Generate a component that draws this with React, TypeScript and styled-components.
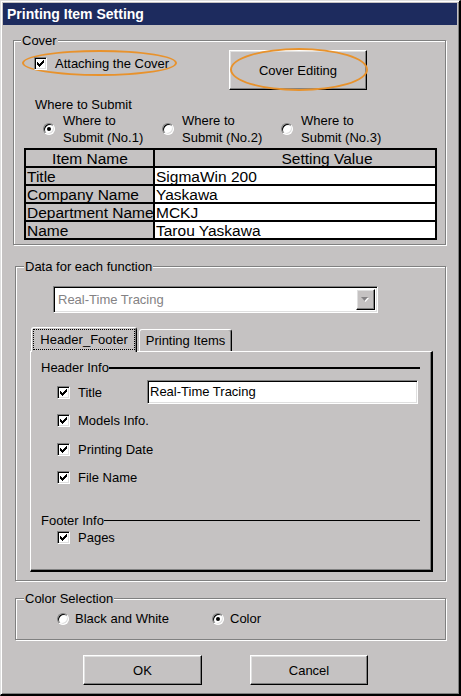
import styled, { createGlobalStyle } from 'styled-components';

const FACE = '#c5c2c2';
const ORANGE = '#e8922c';

const GlobalStyle = createGlobalStyle`
	html, body {
		margin: 0;
		padding: 0;
		background: ${FACE};
	}
	body {
		font-family: "Liberation Sans", Arial, sans-serif;
		font-size: 13px;
		color: #000;
	}
`;

const CheckMark = () => (
	<svg width="7" height="7" viewBox="0 0 7 7" shapeRendering="crispEdges">
		<path
			fill="#000"
			d="M6 0h1v1h-1z M5 1h2v1h-2z M0 2h1v1h-1z M4 2h3v1h-3z M0 3h2v1h-2z M3 3h3v1h-3z M0 4h5v1h-5z M1 5h3v1h-3z M2 6h1v1h-1z"
		/>
	</svg>
);

const CheckBox = ({ checked = true }: { checked?: boolean }) => (
	<CheckBoxBox>{checked && <CheckMark />}</CheckBoxBox>
);

const Check = ({ label }: { label: string }) => (
	<CheckRow>
		<CheckBox />
		<CheckLabel>{label}</CheckLabel>
	</CheckRow>
);

const App = () => (
	<>
		<GlobalStyle />
		<Window>
			<TitleBar>Printing Item Setting</TitleBar>
			<Body>
				<Group $width={433} $top={15} $bottom={4}>
					<Legend>Cover</Legend>
					<CoverTop>
						<Ellipse>
							<CheckBox />
							<EllipseText>Attaching the Cover</EllipseText>
						</Ellipse>
						<CoverButton>
							Cover Editing
							<ButtonRing />
						</CoverButton>
					</CoverTop>
					<SubmitTitle>Where to Submit</SubmitTitle>
					<SubmitRow>
						{[1, 2, 3].map((n) => (
							<SubmitItem key={n}>
								<RadioCircle $checked={n === 1} />
								<SubmitText>
									Where to
									<br />
									Submit (No.{n})
								</SubmitText>
							</SubmitItem>
						))}
					</SubmitRow>
					<Table>
						<Cell $center>Item Name</Cell>
						<Cell $center $shift={64}>
							Setting Value
						</Cell>
						<Cell>Title</Cell>
						<Cell $value>SigmaWin 200</Cell>
						<Cell>Company Name</Cell>
						<Cell $value>Yaskawa</Cell>
						<Cell>Department Name</Cell>
						<Cell $value>MCKJ</Cell>
						<Cell>Name</Cell>
						<Cell $value>Tarou Yaskawa</Cell>
					</Table>
				</Group>

				<Group $width={431} $left={2} $top={21} $bottom={8}>
					<Legend $left={8}>Data for each function</Legend>
					<Combo>
						<ComboText>Real-Time Tracing</ComboText>
						<ComboArrow>
							<svg width="9" height="6" viewBox="0 0 9 6">
								<polygon points="1,1 8,1 4.5,5" fill="#fff" />
								<polygon points="0,0 7,0 3.5,4" fill="#848284" />
							</svg>
						</ComboArrow>
					</Combo>
					<TabStrip>
						<Tab $active>
							<TabFocus>Header_Footer</TabFocus>
						</Tab>
						<Tab>Printing Items</Tab>
					</TabStrip>
					<TabPanel>
						<SectionHead $thick>Header Info</SectionHead>
						<CheckList>
							<CheckRow>
								<CheckBox />
								<CheckLabel $width={69}>Title</CheckLabel>
								<TextInput>Real-Time Tracing</TextInput>
							</CheckRow>
							<Check label="Models Info." />
							<Check label="Printing Date" />
							<Check label="File Name" />
						</CheckList>
						<SectionHead $gap={23}>Footer Info</SectionHead>
						<FooterList>
							<Check label="Pages" />
						</FooterList>
					</TabPanel>
				</Group>

				<Group $width={431} $left={2} $top={17} $bottom={12}>
					<Legend $left={8}>Color Selection</Legend>
					<ColorRow>
						<ColorItem $width={155}>
							<RadioCircle />
							<span>Black and White</span>
						</ColorItem>
						<ColorItem>
							<RadioCircle $checked />
							<span>Color</span>
						</ColorItem>
					</ColorRow>
				</Group>

				<ButtonRow>
					<PushButton $width={119}>OK</PushButton>
					<PushButton $width={118}>Cancel</PushButton>
				</ButtonRow>
			</Body>
		</Window>
	</>
);

const Window = styled.div`
	box-sizing: border-box;
	width: 461px;
	height: 696px;
	background: ${FACE};
	border-style: solid;
	border-width: 1px 2px 2px 1px;
	border-color: #dfdfdf #000 #000 #dfdfdf;
	box-shadow: inset 1px 1px 0 #fff, inset -1px -1px 0 #808080;
	padding: 2px;
	display: flex;
	flex-direction: column;
`;

const TitleBar = styled.div`
	height: 22px;
	line-height: 22px;
	padding-left: 4px;
	background: #1d2b5e;
	color: #fff;
	font-size: 14px;
	font-weight: bold;
`;

const Body = styled.div`
	display: flex;
	flex-direction: column;
	align-items: flex-start;
	padding: 0 10px;
`;

const Group = styled.div<{ $width: number; $left?: number; $top: number; $bottom: number }>`
	box-sizing: border-box;
	width: ${(p) => p.$width}px;
	margin: ${(p) => p.$top}px 0 0 ${(p) => p.$left ?? 0}px;
	padding-bottom: ${(p) => p.$bottom}px;
	border: 1px solid #808080;
	box-shadow: inset 1px 1px 0 #fff, 1px 1px 0 #fff;
	display: flex;
	flex-direction: column;
	align-items: flex-start;
`;

const Legend = styled.div<{ $left?: number }>`
	margin: -8px 0 0 ${(p) => p.$left ?? 7}px;
	padding: 0 1px;
	line-height: 15px;
	background: ${FACE};
`;

const CoverTop = styled.div`
	display: flex;
	align-items: flex-start;
	margin-top: 2px;
	padding-left: 8px;
`;

const Ellipse = styled.div`
	box-sizing: border-box;
	width: 155px;
	height: 26px;
	border: 2px solid ${ORANGE};
	border-radius: 50%;
	display: flex;
	align-items: center;
	padding-left: 10px;
`;

const EllipseText = styled.span`
	margin-left: 8px;
	white-space: nowrap;
`;

const raised = `
	border: 1px solid;
	border-color: #fff #000 #000 #fff;
	box-shadow: inset -1px -1px 0 #808080, inset 1px 1px 0 #dfdfdf;
	background: ${FACE};
`;

const sunken = `
	border: 1px solid;
	border-color: #808080 #fff #fff #808080;
	box-shadow: inset 1px 1px 0 #000, inset -1px -1px 0 #dfdfdf;
	background: #fff;
`;

const CoverButton = styled.div`
	position: relative;
	box-sizing: border-box;
	width: 138px;
	height: 40px;
	margin-left: 52px;
	${raised}
	display: flex;
	align-items: center;
	justify-content: center;
`;

const ButtonRing = styled.span`
	position: absolute;
	left: 0;
	top: -3px;
	width: 138px;
	height: 43px;
	box-sizing: border-box;
	border: 2px solid ${ORANGE};
	border-radius: 50%;
	pointer-events: none;
`;

const SubmitTitle = styled.div`
	margin-top: 7px;
	padding-left: 21px;
	line-height: 15px;
`;

const SubmitRow = styled.div`
	display: flex;
	padding-left: 29px;
`;

const SubmitItem = styled.div`
	width: 119px;
	display: flex;
	align-items: center;
	gap: 8px;
`;

const SubmitText = styled.div`
	line-height: 17px;
	white-space: nowrap;
`;

const RadioCircle = styled.span<{ $checked?: boolean }>`
	position: relative;
	flex: none;
	box-sizing: border-box;
	width: 12px;
	height: 12px;
	border-radius: 50%;
	${sunken}

	&::after {
		content: '';
		display: ${(p) => (p.$checked ? 'block' : 'none')};
		position: absolute;
		left: 3px;
		top: 3px;
		width: 4px;
		height: 4px;
		border-radius: 50%;
		background: #000;
	}
`;

const Table = styled.div`
	display: grid;
	grid-template-columns: 127px 280px;
	grid-auto-rows: 16px;
	gap: 2px;
	margin: 2px 0 0 10px;
	border: 2px solid #000;
	background: #000;
`;

const Cell = styled.div<{ $value?: boolean; $center?: boolean; $shift?: number }>`
	box-sizing: border-box;
	height: 16px;
	overflow: hidden;
	padding: 1px 0 0 ${(p) => p.$shift ?? 1}px;
	font-size: 15.5px;
	line-height: 16px;
	white-space: nowrap;
	text-align: ${(p) => (p.$center ? 'center' : 'left')};
	background: ${(p) => (p.$value ? '#fff' : FACE)};
`;

const Combo = styled.div`
	box-sizing: border-box;
	width: 325px;
	height: 27px;
	margin: 12px 0 0 37px;
	padding: 2px;
	${sunken}
	display: flex;
`;

const ComboText = styled.div`
	flex: 1;
	padding-left: 2px;
	line-height: 21px;
	color: #848284;
`;

const ComboArrow = styled.div`
	box-sizing: border-box;
	width: 19px;
	height: 21px;
	${raised}
	display: flex;
	align-items: center;
	justify-content: center;
`;

const TabStrip = styled.div`
	position: relative;
	z-index: 1;
	display: flex;
	align-items: flex-end;
	gap: 2px;
	margin: 14px 0 0 15px;
`;

const Tab = styled.div<{ $active?: boolean }>`
	box-sizing: border-box;
	height: ${(p) => (p.$active ? 25 : 22)}px;
	width: ${(p) => (p.$active ? 106 : 93)}px;
	margin-bottom: ${(p) => (p.$active ? -1 : 0)}px;
	padding: ${(p) => (p.$active ? '1px 1px 2px' : '0')};
	border: 1px solid;
	border-bottom: none;
	border-color: #fff #000 #000 #fff;
	border-radius: 3px 3px 0 0;
	box-shadow: inset -1px 0 0 #808080;
	background: ${FACE};
	display: flex;
	align-items: center;
	justify-content: center;
	white-space: nowrap;
`;

const TabFocus = styled.span`
	box-sizing: border-box;
	flex: 1;
	height: 100%;
	border: 1px dotted #000;
	display: flex;
	align-items: center;
	justify-content: center;
`;

const TabPanel = styled.div`
	box-sizing: border-box;
	width: 403px;
	height: 221px;
	margin-left: 14px;
	padding: 8px 11px 0 10px;
	border-style: solid;
	border-width: 1px 2px 2px 1px;
	border-color: #fff #000 #000 #fff;
	box-shadow: inset -1px -1px 0 #808080;
	display: flex;
	flex-direction: column;
	align-self: flex-start;
`;

const SectionHead = styled.div<{ $thick?: boolean; $gap?: number }>`
	display: flex;
	align-items: center;
	line-height: 15px;
	margin-top: ${(p) => p.$gap ?? 0}px;

	&::after {
		content: '';
		flex: 1;
		height: ${(p) => (p.$thick ? 2 : 1)}px;
		background: #000;
	}
`;

const CheckList = styled.div`
	display: flex;
	flex-direction: column;
	gap: 4.5px;
	margin-top: 5px;
	padding-left: 16px;
`;

const FooterList = styled.div`
	display: flex;
	flex-direction: column;
	margin-top: 1px;
	padding-left: 16px;
`;

const CheckRow = styled.div`
	display: flex;
	align-items: center;
	min-height: 18px;
	height: 24px;

	${FooterList} & {
		height: 18px;
	}
`;

const CheckBoxBox = styled.span`
	flex: none;
	box-sizing: border-box;
	width: 13px;
	height: 13px;
	${sunken}
	display: flex;
	align-items: center;
	justify-content: center;
`;

const CheckLabel = styled.span<{ $width?: number }>`
	margin-left: 8px;
	white-space: nowrap;
	width: ${(p) => (p.$width ? `${p.$width}px` : 'auto')};
`;

const TextInput = styled.div`
	box-sizing: border-box;
	width: 271px;
	height: 24px;
	padding-left: 2px;
	line-height: 22px;
	${sunken}
`;

const ColorRow = styled.div`
	display: flex;
	height: 17px;
	margin-top: 4px;
	padding-left: 41px;
`;

const ColorItem = styled.div<{ $width?: number }>`
	display: flex;
	align-items: center;
	gap: 6px;
	width: ${(p) => (p.$width ? `${p.$width}px` : 'auto')};
`;

const ButtonRow = styled.div`
	display: flex;
	gap: 48px;
	margin: 15px 0 0 70px;
`;

const PushButton = styled.div<{ $width: number }>`
	box-sizing: border-box;
	width: ${(p) => p.$width}px;
	height: 30px;
	${raised}
	display: flex;
	align-items: center;
	justify-content: center;
`;

export default App;
